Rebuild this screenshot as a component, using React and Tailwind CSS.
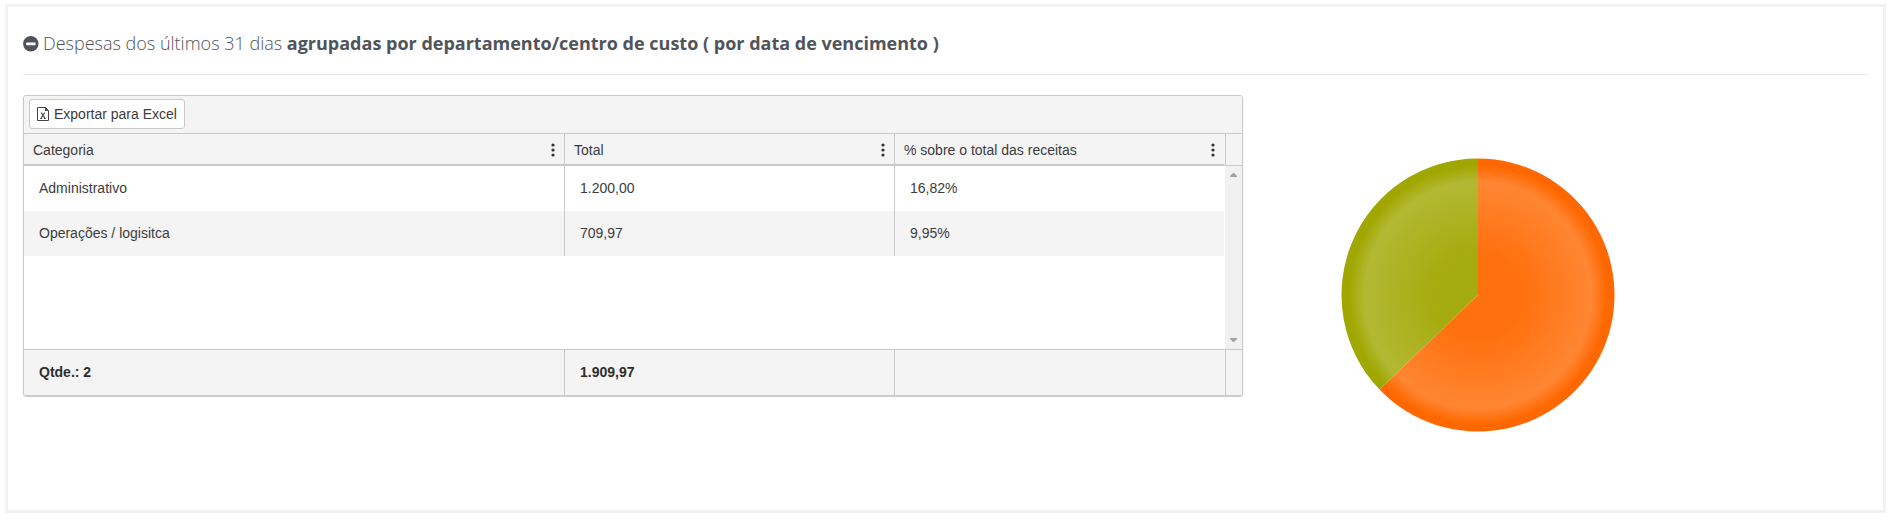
import React from "react";

const rows = [
  { categoria: "Administrativo", total: "1.200,00", valor: 1200, percentual: "16,82%" },
  { categoria: "Operações / logisitca", total: "709,97", valor: 709.97, percentual: "9,95%" },
];

const columns = ["Categoria", "Total", "% sobre o total das receitas"];

const GRID_COLS = "grid grid-cols-[540px_330px_330px]";

const MinusCircle = () => (
  <svg className="mr-1 mt-[1px] h-4 w-4 shrink-0" viewBox="0 0 16 16">
    <circle cx="7.8" cy="7.8" r="7.7" fill="#50545a" />
    <rect x="3.2" y="6.6" width="9.4" height="2.6" rx="0.6" fill="#fff" />
  </svg>
);

const ExcelIcon = () => (
  <svg className="h-[14px] w-3 shrink-0" viewBox="0 0 12 14" fill="none">
    <path d="M0.5 0.5H8.5L11.5 3.5V13.5H0.5Z" stroke="#444" />
    <path d="M8 0.5V4H11.5Z" fill="#444" />
    <path d="M4.2 5.5L7.8 11M7.8 5.5L4.2 11" stroke="#444" strokeWidth="1.2" />
    <path d="M3.2 11.5H5M7 11.5H8.8" stroke="#444" />
  </svg>
);

const MoreIcon = () => (
  <svg className="h-[14px] w-1 shrink-0" viewBox="0 0 4 14" fill="#333">
    <circle cx="2" cy="2" r="1.6" />
    <circle cx="2" cy="7" r="1.6" />
    <circle cx="2" cy="12" r="1.6" />
  </svg>
);

const PieChart = () => {
  const r = 136.5;
  const c = 137;
  const sum = rows.reduce((acc, row) => acc + row.valor, 0);
  const angle = (rows[0].valor / sum) * Math.PI * 2;
  const x = c + r * Math.sin(angle);
  const y = c - r * Math.cos(angle);

  return (
    <svg className="h-[274px] w-[274px]" viewBox="0 0 274 274">
      <defs>
        <radialGradient id="bevel" gradientUnits="userSpaceOnUse" cx={c} cy={c} r={r}>
          <stop offset="0.33" stopColor="#fff" stopOpacity="0.06" />
          <stop offset="0.83" stopColor="#fff" stopOpacity="0.2" />
          <stop offset="0.95" stopColor="#fff" stopOpacity="0" />
        </radialGradient>
      </defs>
      <path d={`M${c} ${c}V${c - r}A${r} ${r} 0 1 1 ${x} ${y}Z`} fill="#ff6800" />
      <path d={`M${c} ${c}L${x} ${y}A${r} ${r} 0 0 1 ${c} ${c - r}Z`} fill="#a0a700" />
      <circle cx={c} cy={c} r={r} fill="url(#bevel)" />
    </svg>
  );
};

const App = () => {
  return (
    <div className="h-[521px] bg-white pl-[5px] pr-[6px] pt-1">
      <div className="h-[509px] border-[3px] border-[#f1f2f4] px-[15px]">
        <div className="flex h-[68px] items-center border-b border-[#eaeaea] pt-[5px] font-['Open_Sans',sans-serif] text-lg text-[#50545a]">
          <MinusCircle />
          <h4 className="font-light whitespace-pre">
            Despesas dos últimos 31 dias <b className="font-bold">agrupadas por departamento/centro de custo ( por data de vencimento )</b>
          </h4>
        </div>

        <div className="flex pt-5">
          <div className="h-[301px] w-[1220px] shrink-0 overflow-hidden rounded-[3px] border border-[#c9c9c9] font-['Liberation_Sans',Arial,sans-serif] text-sm text-[#3c3c3c] shadow-[0_1px_1px_0_#c9c9c9]">
            <div className="h-[38px] border-b border-[#c9c9c9] bg-[#f4f4f4] px-[5px] py-[3px]">
              <button className="flex h-[30px] w-[156px] items-center gap-[5px] rounded-[3px] border border-[#c9c9c9] bg-white pl-[7px] whitespace-nowrap">
                <ExcelIcon />
                Exportar para Excel
              </button>
            </div>

            <div className="flex h-8 border-b border-[#c9c9c9] bg-[#f4f4f4]">
              <div className={GRID_COLS}>
                {columns.map((title, i) => (
                  <div
                    key={title}
                    className={`flex items-center justify-between border-b border-b-[#c9c9c9] pr-[9px] pt-px pl-[9px] ${i > 0 ? "border-l border-l-[#c9c9c9]" : ""}`}
                  >
                    {title}
                    <MoreIcon />
                  </div>
                ))}
              </div>
              <div className="ml-auto w-[17px] border-l border-[#c9c9c9]"></div>
            </div>

            <div className="flex h-[183px]">
              <div className="w-[1200px]">
                {rows.map((row, i) => (
                  <div key={row.categoria} className={`${GRID_COLS} h-[45px] ${i % 2 ? "bg-[#f4f4f4]" : ""}`}>
                    <div className="flex items-center pb-0.5 pl-[15px]">{row.categoria}</div>
                    <div className="flex items-center border-l border-[#c9c9c9] pb-0.5 pl-[15px]">{row.total}</div>
                    <div className="flex items-center border-l border-[#c9c9c9] pb-0.5 pl-[15px]">{row.percentual}</div>
                  </div>
                ))}
              </div>
              <div className="ml-auto flex w-[17px] flex-col items-center justify-between bg-[#f1f1f1] pt-[7px] pb-[7px]">
                <svg className="h-1 w-[7px]" viewBox="0 0 7 4" fill="#a3a3a3"><path d="M3 0H4L7 3V4H0V3Z" /></svg>
                <svg className="h-1 w-[7px]" viewBox="0 0 7 4" fill="#a3a3a3"><path d="M0 0H7V1L4 4H3L0 1Z" /></svg>
              </div>
            </div>

            <div className="grid h-[46px] grid-cols-[540px_330px_331px_1fr] border-t border-[#c9c9c9] bg-[#f4f4f4] font-bold text-[#2e2e2e]">
              <div className="flex items-center pb-0.5 pl-[15px]">Qtde.: {rows.length}</div>
              <div className="flex items-center border-l border-[#c9c9c9] pb-0.5 pl-[15px]">1.909,97</div>
              <div className="border-l border-[#c9c9c9]"></div>
              <div className="border-l border-[#c9c9c9]"></div>
            </div>
          </div>

          <div className="ml-[98px] mt-[63px]">
            <PieChart />
          </div>
        </div>
      </div>
    </div>
  );
};

export default App;
